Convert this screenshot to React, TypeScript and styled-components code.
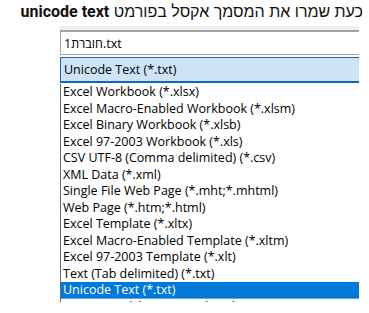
import React from 'react';
import styled, { createGlobalStyle } from 'styled-components';

const GlobalStyle = createGlobalStyle`
	html, body {
		margin: 0;
		padding: 0;
		background: #fff;
	}
	body {
		width: 369px;
		height: 313px;
		overflow: hidden;
	}
`;

const Page = styled.div`
	display: flex;
	flex-direction: column;
	width: 369px;
	height: 313px;
	background: #fff;
	overflow: hidden;
`;

const Title = styled.div`
	direction: rtl;
	padding: 3px 6px 0 0;
	height: 26px;
	box-sizing: border-box;
	font-family: "Liberation Sans", Arial, sans-serif;
	font-size: 16px;
	line-height: 18px;
	color: #111;
	white-space: nowrap;

	& > b {
		font-family: Roboto, "Liberation Sans", sans-serif;
		font-weight: 700;
	}
`;

const Dialog = styled.div`
	display: flex;
	flex-direction: column;
	margin-left: 59px;
	width: 300px;
	font-family: "Open Sans", "Noto Sans", sans-serif;
	font-size: 12.5px;
	color: #000;
`;

const TopStrip = styled.div`
	height: 4px;
	background: #f0f0f0;
`;

const NameBox = styled.div`
	margin-left: 1px;
	height: 25px;
	box-sizing: border-box;
	border: 1px solid #a3a3a3;
	border-top-width: 2px;
	border-right: none;
	background: #fff;
	display: flex;
	align-items: center;
	padding-left: 3px;
	direction: ltr;
`;

const TypeField = styled.div`
	margin: 2px 0 0 1px;
	height: 26px;
	box-sizing: border-box;
	border: 1px solid #1565b8;
	border-bottom-width: 2px;
	border-right: none;
	background: #cce4f7;
	display: flex;
	align-items: center;
	padding-left: 3px;
`;

const List = styled.ul`
	list-style: none;
	margin: 1px 0 0 1px;
	padding: 0;
	height: 218px;
	overflow: hidden;
	border-left: 1px solid #6b6b6b;
	background: #fff;
`;

const Option = styled.li<{ $selected?: boolean }>`
	height: 16.5px;
	line-height: 16.5px;
	padding-left: 2px;
	white-space: nowrap;
	background: ${p => (p.$selected ? '#0078d7' : 'transparent')};
	color: ${p => (p.$selected ? '#fff' : '#000')};
	box-shadow: ${p => (p.$selected ? 'inset 0 -1px 0 #5aa9ec' : 'none')};
`;

const types = [
	'Excel Workbook (*.xlsx)',
	'Excel Macro-Enabled Workbook (*.xlsm)',
	'Excel Binary Workbook (*.xlsb)',
	'Excel 97-2003 Workbook (*.xls)',
	'CSV UTF-8 (Comma delimited) (*.csv)',
	'XML Data (*.xml)',
	'Single File Web Page (*.mht;*.mhtml)',
	'Web Page (*.htm;*.html)',
	'Excel Template (*.xltx)',
	'Excel Macro-Enabled Template (*.xltm)',
	'Excel 97-2003 Template (*.xlt)',
	'Text (Tab delimited) (*.txt)',
	'Unicode Text (*.txt)',
	'XML Spreadsheet 2003 (*.xml)',
];

const App: React.FC = () => {
	return (
		<Page>
			<GlobalStyle />
			<Title>
				כעת שמרו את המסמך אקסל בפורמט <b>unicode text</b>
			</Title>
			<Dialog>
				<TopStrip />
				<NameBox>חוברת1.txt</NameBox>
				<TypeField>Unicode Text (*.txt)</TypeField>
				<List>
					{types.map(t => (
						<Option key={t} $selected={t === 'Unicode Text (*.txt)'}>
							{t}
						</Option>
					))}
				</List>
			</Dialog>
		</Page>
	);
};

export default App;
